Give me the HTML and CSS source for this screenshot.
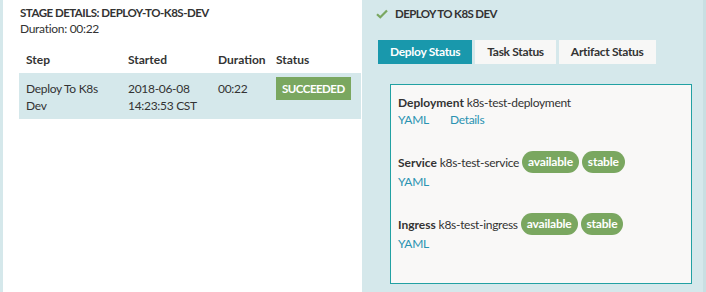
FILE: index.html
```html
<!DOCTYPE html>
<html>
<head>
<meta charset="utf-8">
<link rel="stylesheet" href="styles.css">
</head>
<body>
<div class="page">
  <section class="left">
    <div class="stage-title">STAGE DETAILS: DEPLOY-TO-K8S-DEV</div>
    <div class="stage-duration">Duration: 00:22</div>
    <table class="steps">
      <colgroup>
        <col class="c-step"><col class="c-start"><col class="c-dur"><col class="c-status">
      </colgroup>
      <thead>
        <tr>
          <th>Step</th>
          <th>Started</th>
          <th>Duration</th>
          <th>Status</th>
        </tr>
      </thead>
      <tbody>
        <tr class="active">
          <td>Deploy To K8s<br>Dev</td>
          <td>2018-06-08<br>14:23:53 CST</td>
          <td>00:22</td>
          <td><span class="status-badge">SUCCEEDED</span></td>
        </tr>
      </tbody>
    </table>
  </section>
  <section class="right">
    <div class="step-title">
      <svg class="check" width="12" height="10" viewBox="0 0 12 10"><path d="M1 5.2 L4.3 8.3 L11 1.5" fill="none" stroke="#7aa760" stroke-width="2.2"/></svg>
      <span>DEPLOY TO K8S DEV</span>
    </div>
    <div class="tabs">
      <div class="tab tab-active">Deploy Status</div>
      <div class="tab">Task Status</div>
      <div class="tab">Artifact Status</div>
    </div>
    <div class="box">
      <div class="item">
        <div class="item-head"><b>Deployment</b>&nbsp;k8s-test-deployment</div>
        <div class="links"><a>YAML</a><a class="details">Details</a></div>
      </div>
      <div class="item">
        <div class="item-head badges-row"><b>Service</b>&nbsp;k8s-test-service<span class="pill">available</span><span class="pill">stable</span></div>
        <div class="links"><a>YAML</a></div>
      </div>
      <div class="item">
        <div class="item-head badges-row"><b>Ingress</b>&nbsp;k8s-test-ingress<span class="pill">available</span><span class="pill">stable</span></div>
        <div class="links"><a>YAML</a></div>
      </div>
    </div>
  </section>
</div>
</body>
</html>
```
FILE: styles.css
```css
* { box-sizing: border-box; }
html, body { margin: 0; padding: 0; }
body {
  background: #d5e8eb;
  font-family: "Source Sans Pro", Lato, "Liberation Sans", sans-serif;
  font-size: 12px;
  letter-spacing: -0.3px;
  color: #333;
  width: 706px;
  height: 292px;
  overflow: hidden;
}
b { letter-spacing: 0; }
.page {
  display: flex;
  height: 292px;
  padding-left: 3px;
}
.left {
  width: 359px;
  background: #fff;
  padding: 6px 1px 0 16px;
}
.stage-title {
  font-weight: 700;
  font-size: 11.5px;
  letter-spacing: -0.5px;
  line-height: 14px;
  padding-left: 1px;
}
.stage-duration {
  font-size: 12px;
  line-height: 16px;
  margin-top: 1px;
  padding-left: 1px;
}
.steps {
  border-collapse: collapse;
  table-layout: fixed;
  width: 342px;
  margin-top: 8px;
  font-size: 12px;
}
.c-step { width: 102px; }
.c-start { width: 90px; }
.c-dur { width: 58px; }
.c-status { width: 92px; }
.steps th {
  text-align: left;
  font-weight: 700;
  letter-spacing: 0;
  padding: 0 7px;
  height: 28px;
  vertical-align: middle;
}
.steps td {
  vertical-align: top;
  padding: 7px 7px 5px;
  line-height: 17px;
  white-space: nowrap;
}
.steps tr.active td { background: #d5e8eb; }
.status-badge {
  display: block;
  width: max-content;
  background: #7aa760;
  color: #fff;
  font-weight: 700;
  font-size: 11.5px;
  letter-spacing: -0.5px;
  line-height: 23px;
  padding: 0 6px;
  margin-top: -3px;
}
.right {
  flex: 1;
  padding: 6px 0 0 14px;
  border-right: 3px solid #c9dfe2;
}
.step-title {
  display: flex;
  align-items: center;
  font-weight: 700;
  font-size: 11.5px;
  letter-spacing: -0.6px;
  line-height: 16px;
}
.check { margin-right: 7px; }
.tabs {
  display: flex;
  margin-top: 18px;
  margin-left: 2px;
  gap: 3px;
}
.tab {
  height: 24px;
  line-height: 24px;
  padding: 0 12px;
  background: #f7f7f6;
  font-weight: 700;
  font-size: 12px;
  letter-spacing: -0.3px;
  color: #333;
}
.tab-active { background: #1998ac; color: #fff; }
.box {
  margin: 20px 0 0 14px;
  width: 302px;
  height: 200px;
  border: 1px solid #22a1a3;
  background: #f9f8f7;
  padding: 9px 7px;
}
.item { margin-bottom: 23px; }
.item-head {
  display: flex;
  align-items: center;
  line-height: 17px;
  font-size: 12px;
  white-space: nowrap;
}
.badges-row { height: 22px; }
.pill {
  display: inline-block;
  background: #7aa760;
  color: #fff;
  font-weight: 700;
  letter-spacing: -0.2px;
  height: 22px;
  line-height: 22px;
  padding: 0 6px;
  border-radius: 11px;
  margin-left: 3px;
  font-size: 12px;
}
.links {
  line-height: 17px;
  color: #2a93b2;
}
.links a { color: #2a93b2; }
.details { margin-left: 21px; }
```
